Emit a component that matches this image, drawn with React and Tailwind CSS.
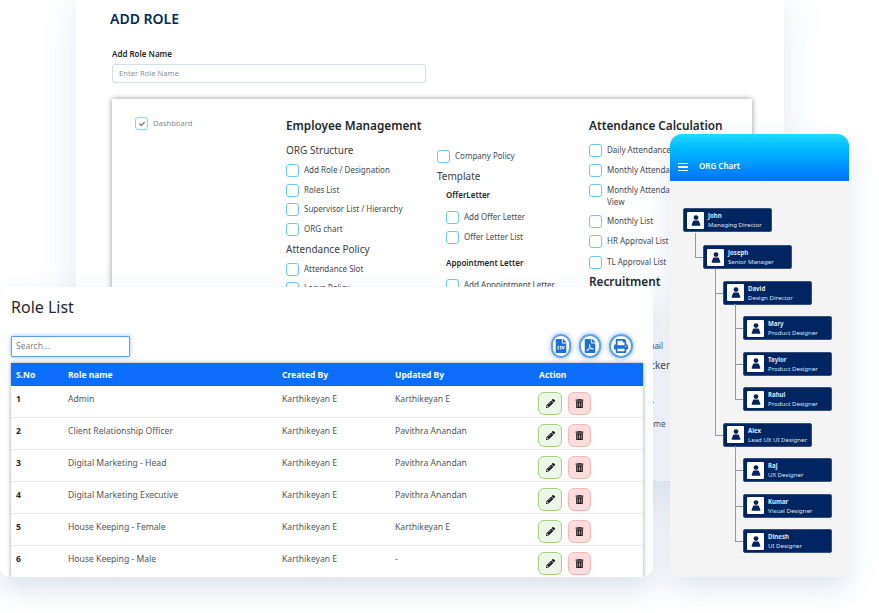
import React from "react";
import { FaCheck, FaFileCsv, FaFilePdf, FaPencilAlt, FaPrint, FaTrashAlt } from "react-icons/fa";

const Check = ({ label, className = "", muted = false, checked = false, labelClass = "" }) => (
  <div className={`flex items-start gap-[5px] ${className}`}>
    <span className={`w-[13px] h-[13px] shrink-0 rounded-[3px] border border-[#6cc6fd] bg-white flex items-center justify-center ${muted ? "opacity-80" : ""}`}>
      {checked && <FaCheck className="text-[6px] text-[#555]" />}
    </span>
    <span className={`leading-[12px] ${muted ? "text-[7.6px] text-[#8a8a8a]" : "text-[8px] text-[#444a52]"} ${labelClass}`}>{label}</span>
  </div>
);

const H = ({ children, className = "" }) => (
  <div className={`text-[11.75px] leading-[16px] font-semibold text-[#23272b] ${className}`}>{children}</div>
);
const Sub = ({ children, className = "" }) => (
  <div className={`text-[10px] leading-[14px] text-[#3a4047] ${className}`}>{children}</div>
);
const Bold = ({ children, className = "" }) => (
  <div className={`text-[8px] leading-[12px] font-semibold text-[#23272b] ${className}`}>{children}</div>
);

function AddRole() {
  return (
    <div className="absolute left-[76px] top-[-14px] w-[708px] h-[495px] rounded-[14px] bg-white shadow-[0_10px_40px_rgba(110,140,180,0.18)] overflow-hidden pt-[24px] pl-[36px]">
      <h1 className="ml-[-2px] text-[14px] leading-[18px] font-semibold text-[#002a5e]">ADD ROLE</h1>
      <div className="mt-[20px] text-[8px] leading-[12px] font-semibold text-[#23272b]">Add Role Name</div>
      <div className="mt-[4px] w-[314px] h-[19px] rounded-[3px] border border-[#d6dee6] flex items-center pl-[6px] text-[7.6px] text-[#8a9097]">Enter Role Name</div>
      <div className="mt-[16px] w-[640px] h-[420px] bg-white shadow-[0_0_6px_rgba(0,0,0,0.4)] flex pl-[23px]">
        <div className="w-[151px] pt-[18px]">
          <Check label="Dashboard" muted checked />
        </div>
        <div className="w-[151px] pt-[18px]">
          <H>Employee Management</H>
          <Sub className="mt-[10px]">ORG Structure</Sub>
          <Check label="Add Role / Designation" className="mt-[7px]" />
          <Check label="Roles List" className="mt-[6.5px]" />
          <Check label="Supervisor List / Hierarchy" className="mt-[6.5px]" />
          <Check label="ORG chart" className="mt-[6.5px]" />
          <Sub className="mt-[6px]">Attendance Policy</Sub>
          <Check label="Attendance Slot" className="mt-[7px]" />
          <Check label="Leave Policy" className="mt-[6.5px]" />
        </div>
        <div className="w-[152px] pt-[51px]">
          <Check label="Company Policy" />
          <Sub className="mt-[6px]">Template</Sub>
          <div className="pl-[9px]">
            <Bold className="mt-[6px]">OfferLetter</Bold>
            <Check label="Add Offer Letter" className="mt-[10px]" />
            <Check label="Offer Letter List" className="mt-[6.5px]" />
            <Bold className="mt-[13px]">Appointment Letter</Bold>
            <Check label="Add Appointment Letter" className="mt-[10px]" />
          </div>
        </div>
        <div className="w-[140px] pt-[18px]">
          <H className="whitespace-nowrap">Attendance Calculation</H>
          <Check label="Daily Attendance" className="mt-[10.5px]" labelClass="whitespace-nowrap" />
          <Check label="Monthly Attendance" className="mt-[7px]" labelClass="whitespace-nowrap" />
          <Check label="Monthly Attendance Calendar View" className="mt-[7px]" />
          <Check label="Monthly List" className="mt-[7.5px]" />
          <Check label="HR Approval List" className="mt-[7px]" />
          <Check label="TL Approval List" className="mt-[7.5px]" />
          <H className="mt-[4.5px]">Recruitment</H>
          <div className="mt-[50.5px] pr-[66px] text-right text-[8px] leading-[12px] text-[#444a52] whitespace-nowrap">Candidate Email</div>
          <div className="mt-[6px] text-[10px] leading-[14px] text-[#3a4047] whitespace-nowrap">Interview Tracker</div>
          <div className="mt-[24px] pr-[75px] text-right text-[8px] leading-[12px] text-[#444a52] whitespace-nowrap">Job Portal -</div>
          <div className="mt-[10px] text-[8px] leading-[12px] text-[#444a52] whitespace-nowrap pl-[6px]">Candidate Resume</div>
        </div>
      </div>
    </div>
  );
}

const roles = [
  ["Admin", "Karthikeyan E", "Karthikeyan E"],
  ["Client Relationship Officer", "Karthikeyan E", "Pavithra Anandan"],
  ["Digital Marketing - Head", "Karthikeyan E", "Pavithra Anandan"],
  ["Digital Marketing Executive", "Karthikeyan E", "Pavithra Anandan"],
  ["House Keeping - Female", "Karthikeyan E", "Karthikeyan E"],
  ["House Keeping - Male", "Karthikeyan E", "-"],
];

const Round = ({ children, className = "" }) => (
  <span className={`h-[24px] rounded-full bg-white border-2 border-[#5f9fe8] shadow-[0_0_5px_rgba(13,110,253,0.55)] flex items-center justify-center text-[#1d6fe0] ${className}`}>{children}</span>
);

function RoleList() {
  return (
    <div className="absolute left-0 top-[287px] w-[653px] h-[290px] rounded-[10px] bg-white shadow-[0_12px_30px_rgba(110,140,180,0.25)] overflow-hidden px-[11px]">
      <h2 className="mt-[9px] text-[16px] leading-[22px] text-[#25292d]">Role List</h2>
      <div className="mt-[16px] flex items-center justify-between pr-[9px]">
        <div className="w-[119px] h-[21px] border border-[#5f9fe8] rounded-[1px] shadow-[0_0_4px_rgba(13,110,253,0.45)] flex items-center pl-[4px] text-[8.5px] text-[#7d838a]">Search...</div>
        <div className="flex items-center gap-[8px]">
          <Round className="w-[20px]"><FaFileCsv className="text-[14px]" /></Round>
          <Round className="w-[22px]"><FaFilePdf className="text-[14px]" /></Round>
          <Round className="w-[24px]"><FaPrint className="text-[14px]" /></Round>
        </div>
      </div>
      <div className="mt-[5px] w-[632px] shadow-[0_0_4px_rgba(0,0,0,0.4)]">
        <div className="grid grid-cols-[52px_214px_113px_144px_109px] h-[23px] pt-[2px] items-center bg-[#0d6efd] text-[8.5px] font-bold text-white">
          {["S.No", "Role name", "Created By", "Updated By", "Action"].map((t) => (
            <div key={t} className="pl-[5px]">{t}</div>
          ))}
        </div>
        {roles.map((r, i) => (
          <div key={i} className="grid grid-cols-[52px_214px_113px_144px_109px] h-[32px] border-b border-[#e6e8ea] bg-white text-[8.6px] leading-[12px] text-[#50565c]">
            <div className="pl-[5px] pt-[7px] font-bold text-[#23272b]">{i + 1}</div>
            <div className="pl-[5px] pt-[7px]">{r[0]}</div>
            <div className="pl-[5px] pt-[7px]">{r[1]}</div>
            <div className="pl-[5px] pt-[7px]">{r[2]}</div>
            <div className="pl-[4px] pt-[6px] flex gap-[6px] items-start">
              <span className="w-[24px] h-[23px] rounded-[6px] border border-[#a5cf7f] bg-[#eef6e8] flex items-center justify-center text-[#111]"><FaPencilAlt className="text-[9px]" /></span>
              <span className="w-[23px] h-[23px] rounded-[6px] border border-[#f3b6b6] bg-[#fddcdc] flex items-center justify-center text-[#222]"><FaTrashAlt className="text-[9px]" /></span>
            </div>
          </div>
        ))}
      </div>
    </div>
  );
}

const tree = {
  n: "John", r: "Managing Director", c: [
    { n: "Joseph", r: "Senior Manager", c: [
      { n: "David", r: "Design Director", c: [
        { n: "Mary", r: "Product Designer" },
        { n: "Taylor", r: "Product Designer" },
        { n: "Rahul", r: "Product Designer" },
      ]},
      { n: "Alex", r: "Lead UX UI Designer", c: [
        { n: "Raj", r: "UX Designer" },
        { n: "Kumar", r: "Visual Designer" },
        { n: "Dinesh", r: "UI Designer" },
      ]},
    ]},
  ],
};

const Person = () => (
  <svg viewBox="0 0 10 11" className="w-[10px] h-[11px]" fill="#002561">
    <circle cx="5" cy="2.6" r="2.4" />
    <path d="M2.9 5.6h4.2c.5 0 .8.3 1 .8L9.4 10c.1.4-.1.7-.5.7H1.1c-.4 0-.6-.3-.5-.7l1.3-3.6c.2-.5.5-.8 1-.8z" />
  </svg>
);

function OrgNode({ node, isChild, last }) {
  return (
    <div className={`relative ${isChild ? "ml-[20px]" : ""}`}>
      {isChild && (
        <>
          <span className={`absolute left-[-8px] top-[-12px] w-px bg-[#8c9bb3] ${last ? "h-[24px]" : "bottom-0"}`} />
          <span className="absolute left-[-8px] top-[12px] w-[8px] h-px bg-[#8c9bb3]" />
        </>
      )}
      <div className="relative w-[89px] h-[24px] rounded-[2px] bg-[#002561] border border-[#33507f] flex items-center pl-[3px] gap-[4px]">
        <span className="w-[17px] h-[17px] bg-white rounded-[1px] flex items-center justify-center"><Person /></span>
        <div className="text-[6.1px] leading-[9px] text-[#dfe6f0] whitespace-nowrap">
          <div className="font-bold">{node.n}</div>
          <div>{node.r}</div>
        </div>
      </div>
      {node.c && (
        <div className={`${isChild ? "mt-[11.5px]" : "mt-[13px]"} flex flex-col gap-[11.5px]`}>
          {node.c.map((c, i) => (
            <OrgNode key={c.n} node={c} isChild last={i === node.c.length - 1} />
          ))}
        </div>
      )}
    </div>
  );
}

function Phone() {
  return (
    <div className="absolute left-[670px] top-[134px] w-[179px] h-[443px] rounded-[12px] bg-[#f4f4f4] shadow-[0_12px_30px_rgba(110,140,180,0.22)] overflow-hidden">
      <div className="h-[47px] bg-gradient-to-b from-[#1edbff] to-[#0d6efd] flex items-end pb-[9px] pl-[8px] gap-[11px] text-white">
        <div className="w-[10px] flex flex-col gap-[2px] mb-[1px]">
          <span className="h-[1.5px] bg-white" /><span className="h-[1.5px] bg-white" /><span className="h-[1.5px] bg-white" />
        </div>
        <span className="text-[8px] leading-[12px] font-semibold">ORG Chart</span>
      </div>
      <div className="pt-[27px] pl-[13px]">
        <OrgNode node={tree} />
      </div>
    </div>
  );
}

export default function App() {
  return (
    <div className="relative w-[879px] h-[613px] overflow-hidden bg-white font-['Noto_Sans','Open_Sans',sans-serif]">
      <AddRole />
      <RoleList />
      <Phone />
    </div>
  );
}
